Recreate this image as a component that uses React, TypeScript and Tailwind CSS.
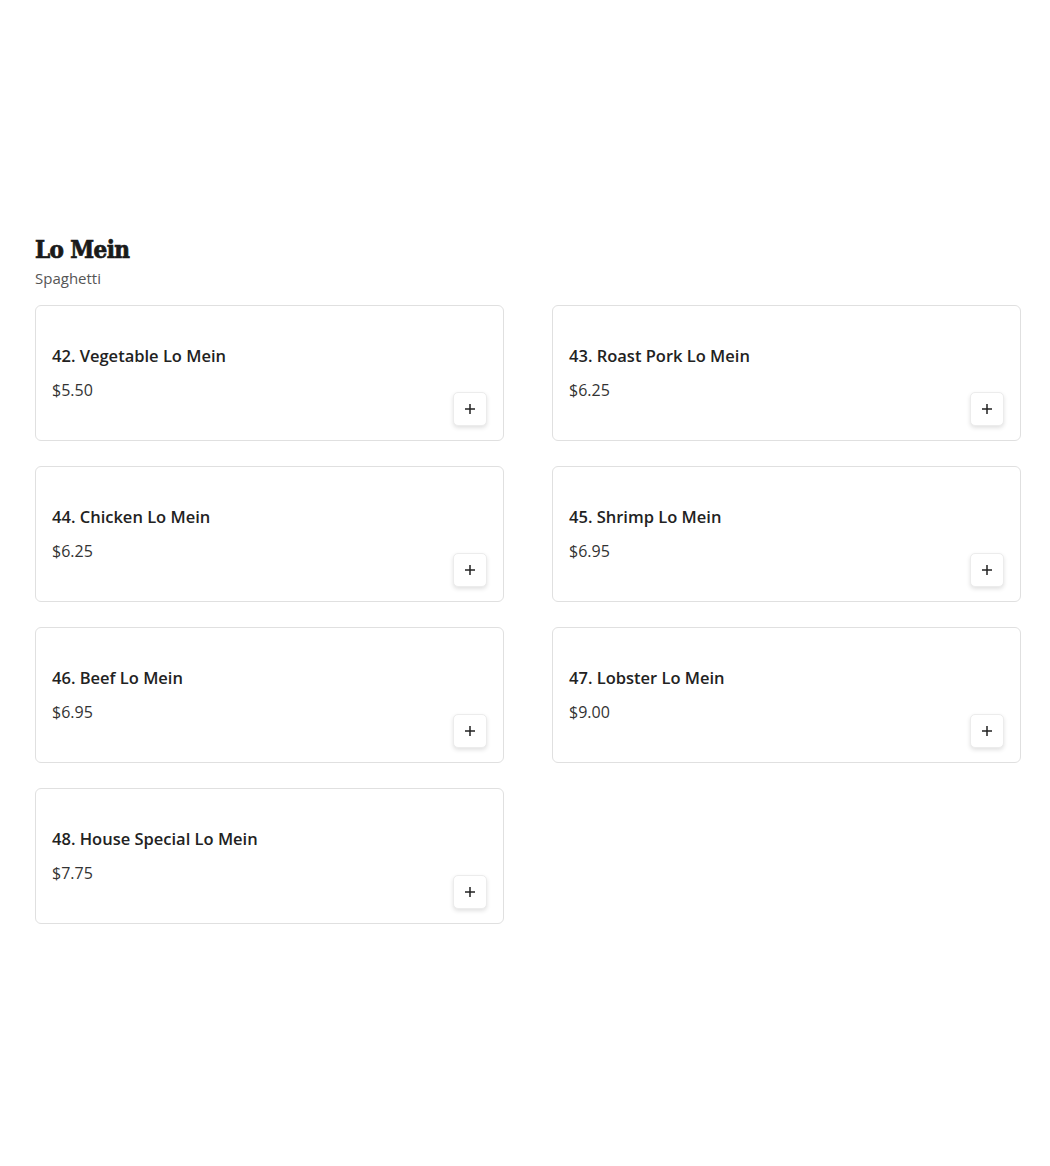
import React from 'react';

interface MenuItem {
    id: number;
    name: string;
    price: string;
}

const ITEMS: MenuItem[] = [
    { id: 42, name: 'Vegetable Lo Mein', price: '$5.50' },
    { id: 43, name: 'Roast Pork Lo Mein', price: '$6.25' },
    { id: 44, name: 'Chicken Lo Mein', price: '$6.25' },
    { id: 45, name: 'Shrimp Lo Mein', price: '$6.95' },
    { id: 46, name: 'Beef Lo Mein', price: '$6.95' },
    { id: 47, name: 'Lobster Lo Mein', price: '$9.00' },
    { id: 48, name: 'House Special Lo Mein', price: '$7.75' },
];

const body = { fontFamily: '"Open Sans", "Liberation Sans", sans-serif' };

export default function App() {
    return (
        <div className="min-h-[1166px] bg-white pl-[35px] pr-[29px] pt-[234px]" style={body}>
            <h2 className="text-[24px] leading-[32px] font-black text-[#1a1a1a] tracking-[-0.6px] [-webkit-text-stroke:0.7px_#1a1a1a]" style={{ fontFamily: '"DejaVu Serif Condensed", "DejaVu Serif", serif', fontStretch: 'condensed' }}>
                Lo Mein
            </h2>
            <p className="mt-[2px] text-[15px] leading-[20px] text-[#555]">Spaghetti</p>

            {/* Items grid */}
            <div className="mt-[17px] grid grid-cols-2 gap-x-[48px] gap-y-[25px]">
                {ITEMS.map(item => (
                    <ItemCard key={item.id} item={item} />
                ))}
            </div>
        </div>
    );
}

const ItemCard: React.FC<{ item: MenuItem }> = ({ item }) => (
    <div className="h-[136px] rounded-[6px] border border-[#e0e0e0] bg-white flex justify-between pl-4 pr-4 pt-4 pb-[14px]">
        <div className="pt-[22px]">
            <div className="text-[16.5px] leading-[24px] font-semibold text-[#222]">
                {item.id}. {item.name}
            </div>
            <div className="mt-[10px] text-[16px] leading-[24px] text-[#333]">{item.price}</div>
        </div>
        <button className="self-end w-[34px] h-[34px] rounded-[5px] border border-[#ececec] bg-white shadow-[0_2px_4px_rgba(0,0,0,0.12)] flex items-center justify-center">
            <svg width="12" height="12" viewBox="0 0 12 12" fill="none" stroke="#222" strokeWidth="1.5">
                <path d="M6 1v10M1 6h10" />
            </svg>
        </button>
    </div>
);
